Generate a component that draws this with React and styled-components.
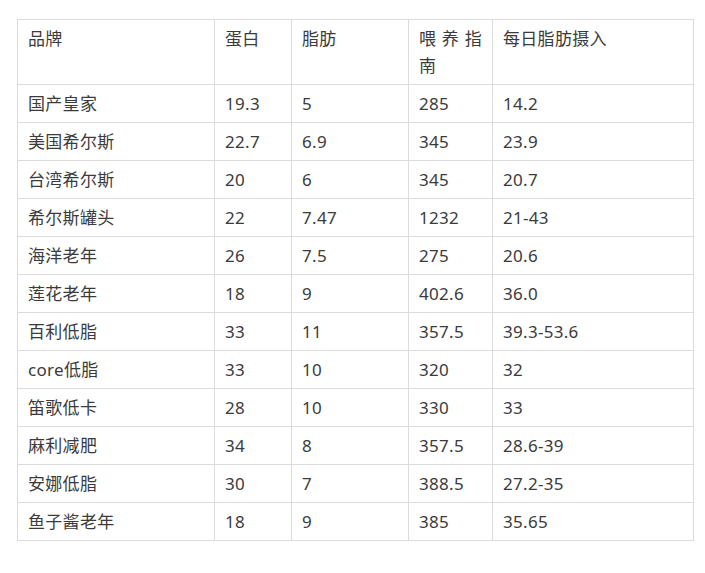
import React from 'react'
import styled, { createGlobalStyle } from 'styled-components'

const GlobalStyle = createGlobalStyle`
	body {
		margin: 0;
		background: #fff;
		font-family: 'Noto Sans', 'Noto Sans CJK SC', sans-serif;
	}
`

const Page = styled.div`
	padding: 19px 12px 0 17px;
`

const Table = styled.table`
	width: 676px;
	border-collapse: collapse;
	table-layout: fixed;
	color: #3b3b3b;
	font-size: 17px;
	line-height: 27px;
	letter-spacing: 0.3px;
`

const Cell = styled.td`
	border: 1px solid #dcdcdc;
	padding: 5px 10px;
	vertical-align: top;
	text-align: justify;
	word-break: break-all;
`

const HeadCell = styled(Cell).attrs({ as: 'th' })`
	font-weight: normal;
`

const columns = [
	{ title: '品牌', width: 197 },
	{ title: '蛋白', width: 77 },
	{ title: '脂肪', width: 117 },
	{ title: '喂养指南', width: 84 },
	{ title: '每日脂肪摄入', width: 201 },
]

const rows = [
	['国产皇家', '19.3', '5', '285', '14.2'],
	['美国希尔斯', '22.7', '6.9', '345', '23.9'],
	['台湾希尔斯', '20', '6', '345', '20.7'],
	['希尔斯罐头', '22', '7.47', '1232', '21-43'],
	['海洋老年', '26', '7.5', '275', '20.6'],
	['莲花老年', '18', '9', '402.6', '36.0'],
	['百利低脂', '33', '11', '357.5', '39.3-53.6'],
	['core低脂', '33', '10', '320', '32'],
	['笛歌低卡', '28', '10', '330', '33'],
	['麻利减肥', '34', '8', '357.5', '28.6-39'],
	['安娜低脂', '30', '7', '388.5', '27.2-35'],
	['鱼子酱老年', '18', '9', '385', '35.65'],
]

const App = () => {
	return (
		<Page>
			<GlobalStyle />
			<Table>
				<colgroup>
					{columns.map((c) => (
						<col key={c.title} style={{ width: c.width }} />
					))}
				</colgroup>
				<thead>
					<tr>
						{columns.map((c) => (
							<HeadCell key={c.title}>{c.title}</HeadCell>
						))}
					</tr>
				</thead>
				<tbody>
					{rows.map((r) => (
						<tr key={r[0]}>
							{r.map((v, i) => (
								<Cell key={i}>{v}</Cell>
							))}
						</tr>
					))}
				</tbody>
			</Table>
		</Page>
	)
}

export default App
